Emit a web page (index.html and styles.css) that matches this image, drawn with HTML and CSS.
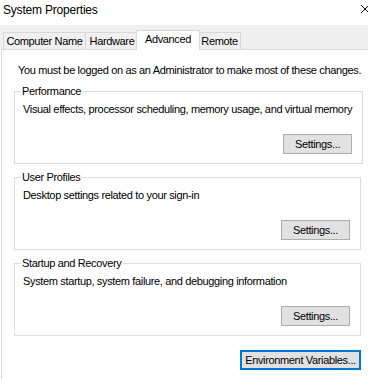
FILE: index.html
```html
<!DOCTYPE html>
<html lang="en">
<head>
    <meta charset="UTF-8">
    <meta name="viewport" content="width=device-width, initial-scale=1.0">
    <title>System Properties</title>
    <link rel="stylesheet" href="styles.css">
</head>
<body>
    <div class="titlebar">
        <span class="title">System Properties</span>
        <span class="close-btn">
            <svg width="10" height="10" viewBox="0 0 10 10"><path d="M1 1 L9 9 M9 1 L1 9" stroke="#000" stroke-width="1"/></svg>
        </span>
    </div>

    <div class="tabstrip">
        <div class="tab tab-computer">Computer Name</div>
        <div class="tab tab-hardware">Hardware</div>
        <div class="tab tab-advanced selected">Advanced</div>
        <div class="tab tab-remote">Remote</div>
    </div>

    <div class="panel">
        <p class="note">You must be logged on as an Administrator to make most of these changes.</p>

        <fieldset class="group">
            <legend>Performance</legend>
            <div class="group-text">Visual effects, processor scheduling, memory usage, and virtual memory</div>
            <div class="group-actions"><button class="btn">Settings...</button></div>
        </fieldset>

        <fieldset class="group">
            <legend>User Profiles</legend>
            <div class="group-text">Desktop settings related to your sign-in</div>
            <div class="group-actions"><button class="btn">Settings...</button></div>
        </fieldset>

        <fieldset class="group">
            <legend>Startup and Recovery</legend>
            <div class="group-text">System startup, system failure, and debugging information</div>
            <div class="group-actions"><button class="btn">Settings...</button></div>
        </fieldset>

        <div class="panel-actions">
            <button class="btn btn-default">Environment Variables...</button>
        </div>
    </div>
</body>
</html>
```

FILE: styles.css
```css
body {
    margin: 0;
    background: #fff;
    font-family: "Liberation Sans", Arial, sans-serif;
    font-size: 11px;
    letter-spacing: -0.35px;
    white-space: nowrap;
    color: #000;
    height: 380px;
    overflow: hidden;
}
.titlebar {
    height: 25px;
    display: flex;
    justify-content: space-between;
    align-items: flex-start;
    padding-left: 3px;
    box-sizing: border-box;
}
.title {
    font-size: 12px;
    letter-spacing: -0.2px;
    line-height: 16px;
    margin-top: 2px;
}
.close-btn {
    margin-top: 4px;
    margin-right: -2px;
    line-height: 0;
}
.tabstrip {
    background: #f0f0f0;
    height: 24px;
    display: flex;
    align-items: flex-end;
    padding-left: 3px;
    box-sizing: border-box;
}
.tab {
    height: 17px;
    line-height: 16px;
    padding: 0;
    text-align: center;
    border: 1px solid #d9d9d9;
    border-bottom: none;
    margin-right: -1px;
    background: #f0f0f0;
    box-sizing: border-box;
}
.tab-computer { width: 83px; }
.tab-hardware { width: 54px; }
.tab-advanced { width: 64px; }
.tab-remote { width: 43px; }
.tab.selected {
    height: 20px;
    line-height: 17px;
    background: #fff;
    margin: 0 -2px -1px -2px;
    position: relative;
    z-index: 1;
}
.panel {
    margin-left: 1px;
    border-left: 1px solid #d9d9d9;
    border-top: 1px solid #d9d9d9;
    padding: 14px 0 0 12px;
    height: 330px;
    box-sizing: border-box;
}
.note {
    margin: 0 0 8px 4px;
    line-height: 13px;
}
.group {
    width: 347px;
    box-sizing: border-box;
    margin: 0 0 7px 0;
    padding: 5px 10px 9px 8px;
    border: 1px solid #dcdcdc;
}
.group legend {
    padding: 0 1px;
    margin-left: -2px;
    line-height: 13px;
}
.group-text {
    line-height: 13px;
}
.group-actions {
    display: flex;
    justify-content: flex-end;
    margin-top: 18px;
}
.btn {
    font-family: "Liberation Sans", Arial, sans-serif;
    font-size: 11px;
    letter-spacing: -0.35px;
    color: #000;
    background: #e1e1e1;
    border: 1px solid #adadad;
    height: 20px;
    width: 69px;
    padding: 0;
    box-sizing: border-box;
}
.panel-actions {
    display: flex;
    justify-content: flex-end;
    width: 347px;
    margin-top: 14px;
}
.btn-default {
    width: 121px;
    border: 1px solid #0078d7;
    box-shadow: inset 0 0 0 1px #0078d7;
}
```
